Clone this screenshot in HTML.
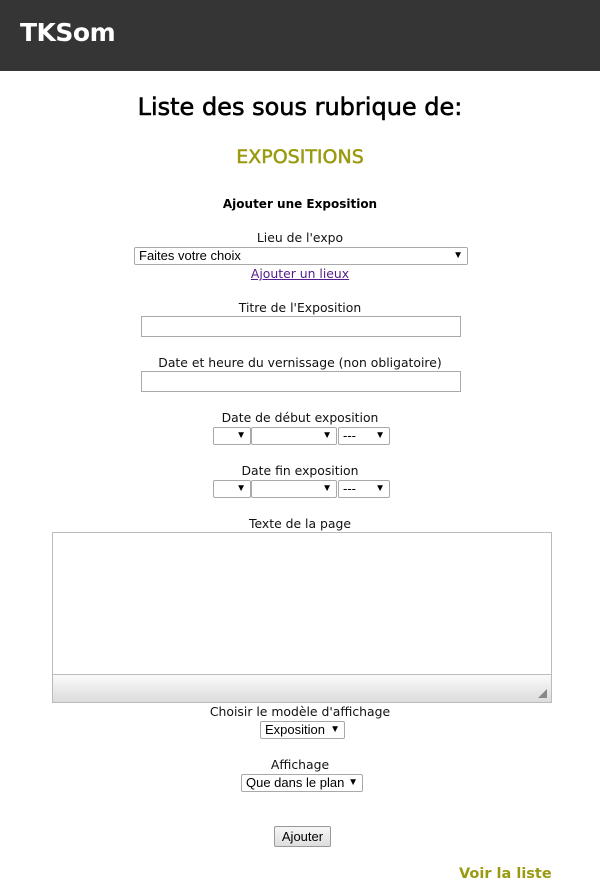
<!DOCTYPE html>
<html><head><meta charset="utf-8"><style>
body{margin:0;width:600px;height:889px;background:#fff;font-family:"DejaVu Sans","Liberation Sans",sans-serif;position:relative;overflow:hidden}
.a{position:absolute}
.hd{left:0;top:0;width:600px;height:71px;background:#353535}
.c{left:0;width:600px;text-align:center;font-size:12.4px;color:#111;white-space:nowrap}
.sel{position:absolute;border:1px solid #a9a9a9;border-radius:2px;background:#fff;box-sizing:border-box;font-family:"Liberation Sans",sans-serif;font-size:13px;color:#000;line-height:15px;padding-left:4px}
.sel:after{content:"▼";position:absolute;right:4px;top:0;font-size:10px}
.inp{position:absolute;border:1px solid #a9a9a9;box-sizing:border-box;background:#fff}
</style></head><body>
<div class="a hd"></div>
<div class="a" style="left:20px;top:18px;font-size:25px;font-weight:bold;color:#fff;letter-spacing:-0.5px">TKSom</div>
<div class="a c" style="top:93px;font-size:24px;color:#000;-webkit-text-stroke:0.6px #000">Liste des sous rubrique de:</div>
<div class="a c" style="top:146px;font-size:19px;color:#9a9a10;-webkit-text-stroke:0.5px #9a9a10">EXPOSITIONS</div>
<div class="a c" style="top:197px;font-size:12px;font-weight:bold;color:#000">Ajouter une Exposition</div>
<div class="a c" style="top:230px">Lieu de l'expo</div>
<div class="sel" style="left:134px;top:247px;width:334px;height:18px">Faites votre choix</div>
<div class="a c" style="top:266px"><span style="color:#551a8b;text-decoration:underline">Ajouter un lieux</span></div>
<div class="a c" style="top:300px">Titre de l'Exposition</div>
<div class="inp" style="left:141px;top:316px;width:320px;height:21px"></div>
<div class="a c" style="top:355px">Date et heure du vernissage (non obligatoire)</div>
<div class="inp" style="left:141px;top:371px;width:320px;height:21px"></div>
<div class="a c" style="top:410px">Date de début exposition</div>
<div class="sel" style="left:213px;top:427px;width:38px;height:18px"></div>
<div class="sel" style="left:251px;top:427px;width:86px;height:18px"></div>
<div class="sel" style="left:338px;top:427px;width:52px;height:18px">---</div>
<div class="a c" style="top:463px">Date fin exposition</div>
<div class="sel" style="left:213px;top:480px;width:38px;height:18px"></div>
<div class="sel" style="left:251px;top:480px;width:86px;height:18px"></div>
<div class="sel" style="left:338px;top:480px;width:52px;height:18px">---</div>
<div class="a c" style="top:516px">Texte de la page</div>
<div class="inp" style="left:52px;top:532px;width:500px;height:171px;border-color:#bbb">
<div class="a" style="left:0;right:0;bottom:0;height:27px;border-top:1px solid #bbb;background:linear-gradient(#fafafa,#dcdcdc)"></div>
<div class="a" style="right:4px;bottom:4px;width:0;height:0;border-left:9px solid transparent;border-bottom:9px solid #888"></div>
</div>
<div class="a c" style="top:704px">Choisir le modèle d'affichage</div>
<div class="sel" style="left:260px;top:721px;width:85px;height:18px">Exposition</div>
<div class="a c" style="top:757px">Affichage</div>
<div class="sel" style="left:241px;top:774px;width:122px;height:18px">Que dans le plan</div>
<div class="a" style="left:274px;top:826px;width:57px;height:21px;box-sizing:border-box;border:1px solid #999;border-radius:2px;background:linear-gradient(#f6f6f6,#dedede);font-family:'Liberation Sans',sans-serif;font-size:13px;text-align:center;line-height:19px">Ajouter</div>
<div class="a" style="left:459px;top:866px;font-size:14.5px;font-weight:bold;color:#9a9a10">Voir la liste</div>
</body></html>
